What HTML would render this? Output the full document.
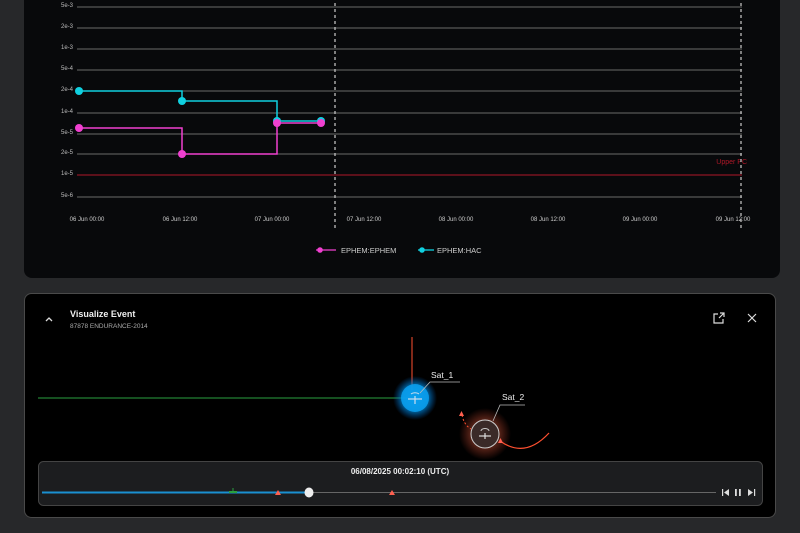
<!DOCTYPE html>
<html><head><meta charset="utf-8"><style>
html,body{margin:0;padding:0;background:#27282a;width:800px;height:533px;overflow:hidden;font-family:"Liberation Sans",sans-serif}
svg{position:absolute;left:0;top:0}
</style></head><body>
<svg width="800" height="533" viewBox="0 0 800 533" font-family="Liberation Sans, sans-serif">
<defs>
<radialGradient id="bg1"><stop offset="0" stop-color="#00aaff" stop-opacity="0.9"/><stop offset="0.55" stop-color="#0090e0" stop-opacity="0.8"/><stop offset="1" stop-color="#0060c0" stop-opacity="0"/></radialGradient>
<radialGradient id="rg1"><stop offset="0.4" stop-color="#ff7050" stop-opacity="0.45"/><stop offset="1" stop-color="#ff5030" stop-opacity="0"/></radialGradient>
</defs>
<rect x="24" y="-10" width="756" height="288" rx="8" fill="#08090b"/>
<g stroke="#6a6a6a" stroke-width="1">
<line x1="77" y1="7" x2="742" y2="7"/><line x1="77" y1="28" x2="742" y2="28"/><line x1="77" y1="49" x2="742" y2="49"/><line x1="77" y1="70" x2="742" y2="70"/><line x1="77" y1="91" x2="742" y2="91"/><line x1="77" y1="113" x2="742" y2="113"/><line x1="77" y1="134" x2="742" y2="134"/><line x1="77" y1="154" x2="742" y2="154"/><line x1="77" y1="197" x2="742" y2="197"/>
</g>
<line x1="77" y1="175" x2="742" y2="175" stroke="#b01828" stroke-width="1"/>
<g fill="#bbb" font-size="6" text-anchor="end">
<text x="73" y="7">5e-3</text><text x="73" y="28">2e-3</text><text x="73" y="49">1e-3</text><text x="73" y="70">5e-4</text><text x="73" y="91">2e-4</text><text x="73" y="113">1e-4</text><text x="73" y="134">5e-5</text><text x="73" y="154">2e-5</text><text x="73" y="175">1e-5</text><text x="73" y="197">5e-6</text>
</g>
<text x="747" y="164" fill="#b01828" font-size="7" text-anchor="end">Upper PC</text>
<g fill="#ccc" font-size="6" text-anchor="middle">
<text x="87" y="221">06 Jun 00:00</text><text x="180" y="221">06 Jun 12:00</text><text x="272" y="221">07 Jun 00:00</text><text x="364" y="221">07 Jun 12:00</text><text x="456" y="221">08 Jun 00:00</text><text x="548" y="221">08 Jun 12:00</text><text x="640" y="221">09 Jun 00:00</text><text x="733" y="221">09 Jun 12:00</text>
</g>
<g stroke="#ccc" stroke-width="1.2" stroke-dasharray="3,3"><line x1="335" y1="3" x2="335" y2="228"/><line x1="741" y1="3" x2="741" y2="228"/></g>
<polyline points="79,91 182,91 182,101 277,101 277,121 321,121" fill="none" stroke="#10d0e0" stroke-width="1.5"/>
<polyline points="79,128 182,128 182,154 277,154 277,123 321,123" fill="none" stroke="#f040d0" stroke-width="1.5"/>
<g fill="#10d0e0"><circle cx="79" cy="91" r="4"/><circle cx="182" cy="101" r="4"/><circle cx="277" cy="121" r="4"/><circle cx="321" cy="121" r="4"/></g>
<g fill="#f040d0"><circle cx="79" cy="128" r="4"/><circle cx="182" cy="154" r="4"/><circle cx="277" cy="123" r="4"/><circle cx="321" cy="123" r="4"/></g>
<line x1="316" y1="250" x2="336" y2="250" stroke="#f040d0" stroke-width="1.3"/><circle cx="320" cy="250" r="2.8" fill="#f040d0"/>
<text x="341" y="253" fill="#ccc" font-size="7.5">EPHEM:EPHEM</text>
<line x1="418" y1="250" x2="434" y2="250" stroke="#10d0e0" stroke-width="1.3"/><circle cx="422" cy="250" r="2.8" fill="#10d0e0"/>
<text x="437" y="253" fill="#ccc" font-size="7.5">EPHEM:HAC</text>

<rect x="24.5" y="293.5" width="751" height="224" rx="7" fill="#000" stroke="#4a4a4a"/>
<polyline points="46,321 49,318 52,321" fill="none" stroke="#ddd" stroke-width="1.3"/>
<text x="70" y="317" fill="#eee" font-size="9" font-weight="bold">Visualize Event</text>
<text x="70" y="328" fill="#aaa" font-size="6.5">87878 ENDURANCE-2014</text>
<g stroke="#ddd" stroke-width="1.2" fill="none"><path d="M718 314h-4v9h9v-4M718 314M720 313h4v4M724 313l-5 5"/><path d="M748 314l8 8M756 314l-8 8"/></g>
<line x1="38" y1="398" x2="413" y2="398" stroke="#2aa040" stroke-width="1"/>
<line x1="412" y1="337" x2="412" y2="390" stroke="#ff5030" stroke-width="1"/>
<circle cx="415" cy="398" r="22" fill="url(#bg1)"/>
<circle cx="415" cy="398" r="14" fill="#0aa0f0" opacity="0.85"/>
<g stroke="#cde" stroke-width="1.2"><line x1="408" y1="399" x2="422" y2="399"/><line x1="415" y1="396" x2="415" y2="404"/></g>
<path d="M411 394a5 3 0 0 1 8 0" stroke="#cde" fill="none"/>
<polyline points="420,393 430,382 460,382" fill="none" stroke="#bbb" stroke-width="0.8"/>
<text x="431" y="378" fill="#eee" font-size="8.5">Sat_1</text>
<circle cx="485" cy="434" r="26" fill="url(#rg1)"/>
<circle cx="485" cy="434" r="14" fill="#3a2a28" stroke="#ccc" stroke-width="1"/>
<g stroke="#ddd" stroke-width="1.2"><line x1="479" y1="436" x2="491" y2="436"/><line x1="485" y1="433" x2="485" y2="439"/></g>
<path d="M481 431a4 2.5 0 0 1 8 0" stroke="#ccc" fill="none"/>
<polyline points="493,421 500,405 525,405" fill="none" stroke="#bbb" stroke-width="0.8"/>
<text x="502" y="400" fill="#eee" font-size="8.5">Sat_2</text>
<path d="M462 415 q2 10 9 14" fill="none" stroke="#ff5030" stroke-dasharray="2,2"/>
<path d="M459 416l2.5-5 2.5 5z" fill="#ff6050"/>
<path d="M500 441 q25 18 49 -8" fill="none" stroke="#ff5030" stroke-width="1.2"/>
<path d="M498 443l2.5-5 2.5 5z" fill="#ff6050"/>

<rect x="38.5" y="461.5" width="724" height="44" rx="5" fill="#1c1d1f" stroke="#444"/>
<text x="400" y="474" fill="#eee" font-size="8" font-weight="bold" text-anchor="middle">06/08/2025  00:02:10 (UTC)</text>
<line x1="42" y1="492.5" x2="716" y2="492.5" stroke="#666" stroke-width="1"/>
<line x1="42" y1="492.5" x2="309" y2="492.5" stroke="#1a90d0" stroke-width="2"/>
<line x1="233" y1="488" x2="233" y2="493" stroke="#2aa040"/><rect x="229" y="491" width="8" height="2" fill="#2aa040"/>
<path d="M275 495l3-5 3 5z" fill="#ff6050"/><path d="M389 495l3-5 3 5z" fill="#ff6050"/>
<ellipse cx="309" cy="492.5" rx="4.5" ry="5" fill="#eee"/>
<g fill="#ddd"><rect x="722" y="489" width="1.2" height="7"/><path d="M729 489v7l-5-3.5z"/><rect x="735" y="489" width="1.8" height="7"/><rect x="739" y="489" width="1.8" height="7"/><path d="M748 489v7l5-3.5z"/><rect x="754" y="489" width="1.2" height="7"/></g>
</svg>
</body></html>
